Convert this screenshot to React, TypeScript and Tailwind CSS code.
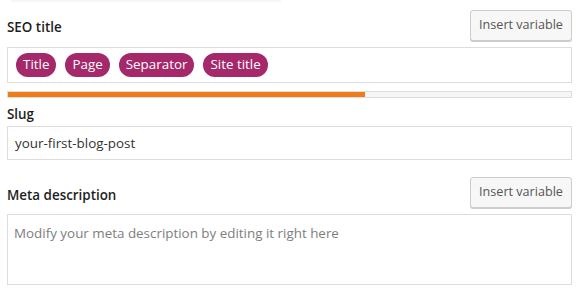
import React from "react";

const font = { fontFamily: '"Segoe UI", "Open Sans", "Noto Sans", sans-serif' };

function InsertButton() {
  return (
    <button className="h-[31px] w-[102px] rounded-[3px] border border-[#cccccc] bg-[#f7f7f7] text-[12.6px] text-[#555555] shadow-[0_1px_0_#cccccc] leading-none">
      Insert variable
    </button>
  );
}

function Pill({ children }: { children: React.ReactNode }) {
  return (
    <span className="flex h-[24px] items-center rounded-full bg-[#a4286a] px-[7px] text-[13.4px] text-white leading-none">
      {children}
    </span>
  );
}

export default function App() {
  return (
    <div style={font} className="relative h-[292px] w-[579px] overflow-hidden bg-white px-[7px] text-[#1e1e1e]">
      <div className="absolute left-[11px] top-0 h-[2px] w-[270px] bg-[#f6f6f6]" />
      <div className="flex items-end justify-between pt-[10px]">
        <span className="mb-[4px] text-[13.4px] font-semibold">SEO title</span>
        <InsertButton />
      </div>
      <div className="mt-[6px] flex h-[36px] items-center gap-[9px] border border-[#dddddd] pl-[8px]">
        <Pill>Title</Pill>
        <Pill>Page</Pill>
        <Pill>Separator</Pill>
        <Pill>Site title</Pill>
      </div>
      <div className="mt-[8px] h-[7px] border border-[#dddddd] bg-[#f5f5f5]">
        <div className="h-full w-[357px] bg-[#ee7c1b]" />
      </div>
      <div className="mt-[7px] text-[13.4px] font-semibold leading-[18px]">Slug</div>
      <div className="mt-[3px] flex h-[34px] items-center border border-[#dddddd] px-[7px] text-[13.4px] text-[#333333]">
        your-first-blog-post
      </div>
      <div className="mt-[17px] flex items-end justify-between">
        <span className="mb-[3px] text-[13.4px] font-semibold">Meta description</span>
        <InsertButton />
      </div>
      <div className="mt-[6px] h-[71px] border border-[#dddddd] px-[6px] pt-[8px] text-[13.4px] text-[#7e7e7e]">
        Modify your meta description by editing it right here
      </div>
    </div>
  );
}
